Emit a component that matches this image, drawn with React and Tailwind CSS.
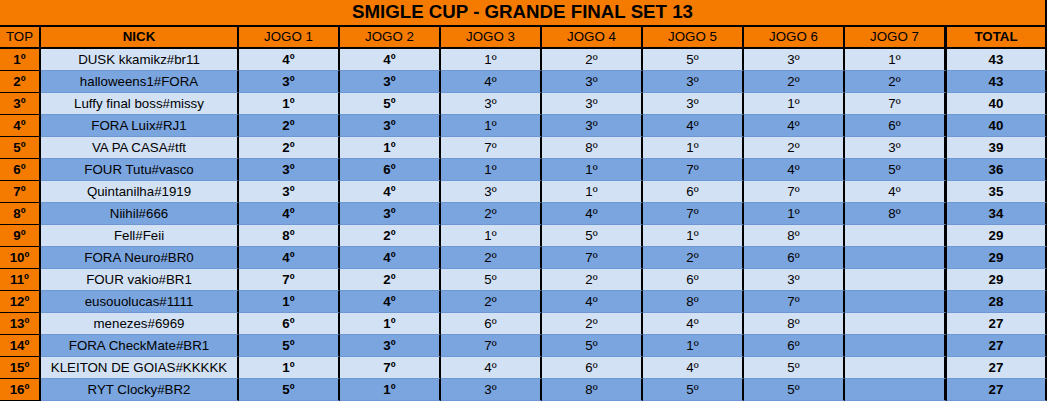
import React from "react";

const rows = [
  ["DUSK kkamikz#br11", [4, 4, 1, 2, 5, 3, 1], 43],
  ["halloweens1#FORA", [3, 3, 4, 3, 3, 2, 2], 43],
  ["Luffy final boss#missy", [1, 5, 3, 3, 3, 1, 7], 40],
  ["FORA Luix#RJ1", [2, 3, 1, 3, 4, 4, 6], 40],
  ["VA PA CASA#tft", [2, 1, 7, 8, 1, 2, 3], 39],
  ["FOUR Tutu#vasco", [3, 6, 1, 1, 7, 4, 5], 36],
  ["Quintanilha#1919", [3, 4, 3, 1, 6, 7, 4], 35],
  ["Niihil#666", [4, 3, 2, 4, 7, 1, 8], 34],
  ["Fell#Feii", [8, 2, 1, 5, 1, 8, null], 29],
  ["FORA Neuro#BR0", [4, 4, 2, 7, 2, 6, null], 29],
  ["FOUR vakio#BR1", [7, 2, 5, 2, 6, 3, null], 29],
  ["eusouolucas#1111", [1, 4, 2, 4, 8, 7, null], 28],
  ["menezes#6969", [6, 1, 6, 2, 4, 8, null], 27],
  ["FORA CheckMate#BR1", [5, 3, 7, 5, 1, 6, null], 27],
  ["KLEITON DE GOIAS#KKKKK", [1, 7, 4, 6, 4, 5, null], 27],
  ["RYT Clocky#BR2", [5, 1, 3, 8, 5, 5, null], 27],
];

const jogoW = [
  "w-[101px]",
  "w-[101px]",
  "w-[101px]",
  "w-[101px]",
  "w-[101px]",
  "w-[101px]",
  "w-[102px] border-r-[3px]",
];

export default function App() {
  return (
    <div
      className="w-[1047px] h-[402px] overflow-hidden bg-white text-black"
      style={{ fontFamily: '"Liberation Sans", Arial, sans-serif' }}
    >
      <div className="h-[27px] bg-[#f47b00] border-b-2 border-r-2 border-black flex items-center justify-center font-bold text-[18.7px] leading-none">
        SMIGLE CUP - GRANDE FINAL SET 13
      </div>
      <div className="flex h-[22px] text-[13.3px] bg-[#f47b00]">
        <div className="w-[41px] border-r-2 border-b-2 border-black flex items-center justify-center">TOP</div>
        <div className="w-[198px] border-r-2 border-b-2 border-black flex items-center justify-center font-bold">NICK</div>
        {jogoW.map((w, i) => (
          <div key={i} className={`${w} border-r-2 border-b-2 border-black flex items-center justify-center`}>
            JOGO {i + 1}
          </div>
        ))}
        <div className="w-[100px] border-r-2 border-b-2 border-black flex items-center justify-center font-bold">TOTAL</div>
      </div>
      {rows.map(([nick, games, total], r) => {
        const bg = r % 2 === 0 ? "bg-[#d2e1f4]" : "bg-[#7ba5de]";
        return (
          <div key={r} className="flex h-[22px] text-[13.3px]">
            <div className="w-[41px] bg-[#f47b00] border-r-2 border-b border-black flex items-center justify-center font-bold">
              {r + 1}º
            </div>
            <div className={`w-[198px] ${bg} border-r-2 border-r-black border-b border-b-[#6e97d3] flex items-center justify-center`}>
              {nick}
            </div>
            {games.map((g, i) => (
              <div
                key={i}
                className={`${jogoW[i]} ${bg} border-r-2 border-r-black border-b border-b-[#6e97d3] flex items-center justify-center ${i < 2 ? "font-bold" : ""}`}
              >
                {g !== null ? `${g}º` : ""}
              </div>
            ))}
            <div className={`w-[100px] ${bg} border-r-2 border-r-black border-b border-b-[#6e97d3] flex items-center justify-center font-bold`}>
              {total}
            </div>
          </div>
        );
      })}
    </div>
  );
}
